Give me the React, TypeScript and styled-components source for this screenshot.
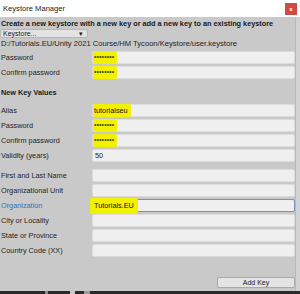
import styled, { createGlobalStyle } from 'styled-components';

const GlobalStyle = createGlobalStyle`
  html, body {
    margin: 0;
    padding: 0;
    background: #2b2b2b;
  }
  * {
    box-sizing: border-box;
  }
`;

const Window = styled.div`
  width: 300px;
  height: 294px;
  display: flex;
  flex-direction: column;
  font-family: 'Liberation Sans', Arial, sans-serif;
  color: #1a1a1a;
  overflow: hidden;
`;

const TitleBar = styled.div`
  height: 17px;
  flex: none;
  display: flex;
  align-items: center;
  justify-content: space-between;
  background: #ffffff;
  padding: 0 3px 0 3px;
  font-size: 7.6px;
  color: #222;
`;

const CloseButton = styled.div`
  width: 12px;
  height: 12px;
  background: #cf4a47;
  color: #fff;
  font-size: 6px;
  font-weight: bold;
  display: flex;
  align-items: center;
  justify-content: center;
`;

const Body = styled.div`
  flex: 1;
  display: flex;
  flex-direction: column;
  background: #c9c9c9;
  border-right: 4px solid #d2d2d2;
  box-shadow: inset -1px 0 0 #b9b9b9;
  padding: 2px 1px 0 1px;
  font-size: 7.3px;
`;

const Heading = styled.div`
  font-weight: bold;
  height: 9px;
  line-height: 9px;
  white-space: nowrap;
`;

const Dropdown = styled.div`
  margin-top: 1px;
  margin-left: -1px;
  width: 88px;
  height: 9px;
  display: flex;
  align-items: center;
  justify-content: space-between;
  padding: 0 4px 0 2px;
  background: #e3e3e3;
  border: 1px solid #b5b5b5;
  border-radius: 2px;
  font-size: 7px;
`;

const PathText = styled.div`
  height: 11px;
  line-height: 11px;
  white-space: nowrap;
  font-size: 7.6px;
  color: #222;
`;

const Rows = styled.div<{ $top: number }>`
  display: flex;
  flex-direction: column;
  gap: 2px;
  margin-top: ${(p) => p.$top}px;
`;

const Row = styled.div`
  display: grid;
  grid-template-columns: 91px 1fr;
  align-items: center;
  height: 13px;
`;

const Label = styled.div<{ $active?: boolean }>`
  color: ${(p) => (p.$active ? '#3b6fb5' : '#1e1e1e')};
  white-space: nowrap;
`;

const Field = styled.div<{ $focused?: boolean }>`
  height: 13px;
  display: flex;
  align-items: center;
  background: #efefef;
  border: 1px solid ${(p) => (p.$focused ? '#6f95c8' : '#dcdcdc')};
  border-radius: 2px;
  padding-left: 1px;
  overflow: visible;
  position: relative;
`;

const Mark = styled.span<{ $big?: boolean }>`
  background: #f2f200;
  display: flex;
  align-items: center;
  height: ${(p) => (p.$big ? '16px' : '13px')};
  margin-left: ${(p) => (p.$big ? '-4px' : '-1px')};
  padding: 0 ${(p) => (p.$big ? '4px' : '3px')} 0 ${(p) => (p.$big ? '4px' : '1px')};
  border-radius: 2px;
  color: #111;
`;

const Stars = styled.span`
  font-size: 6px;
  letter-spacing: 0.2px;
  font-weight: bold;
`;

const Plain = styled.span`
  padding-left: 1px;
`;

const Section = styled.div`
  font-weight: bold;
  margin-top: 9px;
  height: 10px;
  line-height: 10px;
`;

const Footer = styled.div`
  margin-top: auto;
  margin-bottom: 3px;
  display: flex;
  justify-content: flex-end;
`;

const Button = styled.div`
  width: 78px;
  height: 11px;
  display: flex;
  align-items: center;
  justify-content: center;
  background: #e4e4e4;
  border: 1px solid #a9a9a9;
  border-radius: 2px;
  font-size: 7px;
  color: #222;
`;

const BottomStrip = styled.div`
  height: 3px;
  flex: none;
  background: linear-gradient(
    to right,
    #2a2a2a 0 45px,
    #8a8a8a 45px 48px,
    #2a2a2a 48px 70px,
    #c9c9c9 70px 75px,
    #2a2a2a 75px 84px,
    #9a9a9a 84px 90px,
    #2a2a2a 90px
  );
`;

type Entry = { label: string; value?: string; stars?: boolean; mark?: boolean; focused?: boolean };

const topRows: Entry[] = [
  { label: 'Password', stars: true },
  { label: 'Confirm password', stars: true },
];

const keyRows: Entry[] = [
  { label: 'Alias', value: 'tutorialseu', mark: true },
  { label: 'Password', stars: true },
  { label: 'Confirm password', stars: true },
  { label: 'Validity (years)', value: '50' },
];

const personRows: Entry[] = [
  { label: 'First and Last Name' },
  { label: 'Organizational Unit' },
  { label: 'Organization', value: 'Tutorials.EU', mark: true, focused: true },
  { label: 'City or Locality' },
  { label: 'State or Province' },
  { label: 'Country Code (XX)' },
];

const FieldRow = ({ entry }: { entry: Entry }) => (
  <Row>
    <Label $active={entry.focused}>{entry.label}</Label>
    <Field $focused={entry.focused}>
      {entry.stars && (
        <Mark>
          <Stars>********</Stars>
        </Mark>
      )}
      {entry.value && entry.mark && <Mark $big={entry.focused}>{entry.value}</Mark>}
      {entry.value && !entry.mark && <Plain>{entry.value}</Plain>}
    </Field>
  </Row>
);

export default function App() {
  return (
    <>
      <GlobalStyle />
      <Window>
        <TitleBar>
          <span>Keystore Manager</span>
          <CloseButton>x</CloseButton>
        </TitleBar>
        <Body>
          <Heading>Create a new keystore with a new key or add a new key to an existing keystore</Heading>
          <Dropdown>
            <span>Keystore...</span>
            <span>▾</span>
          </Dropdown>
          <PathText>D:/Tutorials.EU/Unity 2021 Course/HM Tycoon/Keystore/user.keystore</PathText>
          <Rows $top={2}>
            {topRows.map((r, i) => (
              <FieldRow key={i} entry={r} />
            ))}
          </Rows>
          <Section>New Key Values</Section>
          <Rows $top={6}>
            {keyRows.map((r, i) => (
              <FieldRow key={i} entry={r} />
            ))}
          </Rows>
          <Rows $top={7}>
            {personRows.map((r, i) => (
              <FieldRow key={i} entry={r} />
            ))}
          </Rows>
          <Footer>
            <Button>Add Key</Button>
          </Footer>
        </Body>
        <BottomStrip />
      </Window>
    </>
  );
}
